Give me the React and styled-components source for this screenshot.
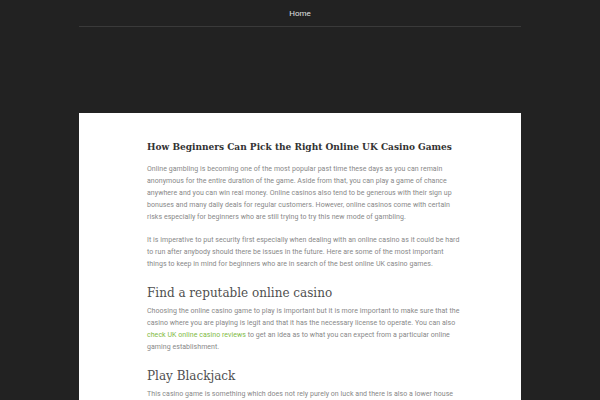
import React from 'react';
import styled, { createGlobalStyle } from 'styled-components';

const GlobalStyle = createGlobalStyle`
  html, body {
    margin: 0;
    padding: 0;
    background: #222222;
  }
  body {
    font-family: Roboto, "Liberation Sans", sans-serif;
  }
`;

const Page = styled.div`
  min-height: 400px;
  background: #222222;
`;

const Header = styled.header`
  width: 442px;
  margin: 0 auto;
  height: 26px;
  border-bottom: 1px solid #3a3a3a;
  display: flex;
  align-items: center;
  justify-content: center;
`;

const NavLink = styled.a`
  font-size: 8px;
  color: #e0e0e0;
  text-decoration: none;
`;

const Card = styled.article`
  width: 442px;
  box-sizing: border-box;
  margin: 86px auto 0;
  background: #ffffff;
  padding: 27px 60px 40px 68px;
`;

const Title = styled.h1`
  font-family: "DejaVu Serif", "Liberation Serif", serif;
  font-weight: 700;
  font-size: 9px;
  line-height: 14px;
  color: #333333;
  margin: 0 0 9px;
  white-space: nowrap;
`;

const Heading = styled.h2`
  font-family: "DejaVu Serif", "Liberation Serif", serif;
  font-weight: 400;
  font-size: 12px;
  line-height: 16px;
  color: #4f4f4f;
  margin: 15px 0 4px;
`;

const Paragraph = styled.p`
  font-size: 7px;
  line-height: 12px;
  letter-spacing: 0.05px;
  color: #888888;
  margin: 0 0 11px;
  white-space: nowrap;

  &:last-child {
    margin-bottom: 0;
  }
`;

const Line = styled.span`
  display: block;
`;

const TextLink = styled.a`
  color: #7fba45;
  text-decoration: none;
`;

const intro = [
  'Online gambling is becoming one of the most popular past time these days as you can remain',
  'anonymous for the entire duration of the game. Aside from that, you can play a game of chance',
  'anywhere and you can win real money. Online casinos also tend to be generous with their sign up',
  'bonuses and many daily deals for regular customers. However, online casinos come with certain',
  'risks especially for beginners who are still trying to try this new mode of gambling.',
];

const security = [
  'It is imperative to put security first especially when dealing with an online casino as it could be hard',
  'to run after anybody should there be issues in the future. Here are some of the most important',
  'things to keep in mind for beginners who are in search of the best online UK casino games.',
];

export default function App() {
  return (
    <Page>
      <GlobalStyle />
      <Header>
        <NavLink href="#">Home</NavLink>
      </Header>
      <Card>
        <Title>How Beginners Can Pick the Right Online UK Casino Games</Title>
        <Paragraph>
          {intro.map((l, i) => <Line key={i}>{l}</Line>)}
        </Paragraph>
        <Paragraph>
          {security.map((l, i) => <Line key={i}>{l}</Line>)}
        </Paragraph>
        <Heading>Find a reputable online casino</Heading>
        <Paragraph>
          <Line>Choosing the online casino game to play is important but it is more important to make sure that the</Line>
          <Line>casino where you are playing is legit and that it has the necessary license to operate. You can also</Line>
          <Line>
            <TextLink href="#">check UK online casino reviews</TextLink> to get an idea as to what you can expect from a particular online
          </Line>
          <Line>gaming establishment.</Line>
        </Paragraph>
        <Heading>Play Blackjack</Heading>
        <Paragraph>
          <Line>This casino game is something which does not rely purely on luck and there is also a lower house</Line>
          <Line>edge compared to other games, which makes it a great choice for beginners.</Line>
        </Paragraph>
      </Card>
    </Page>
  );
}
